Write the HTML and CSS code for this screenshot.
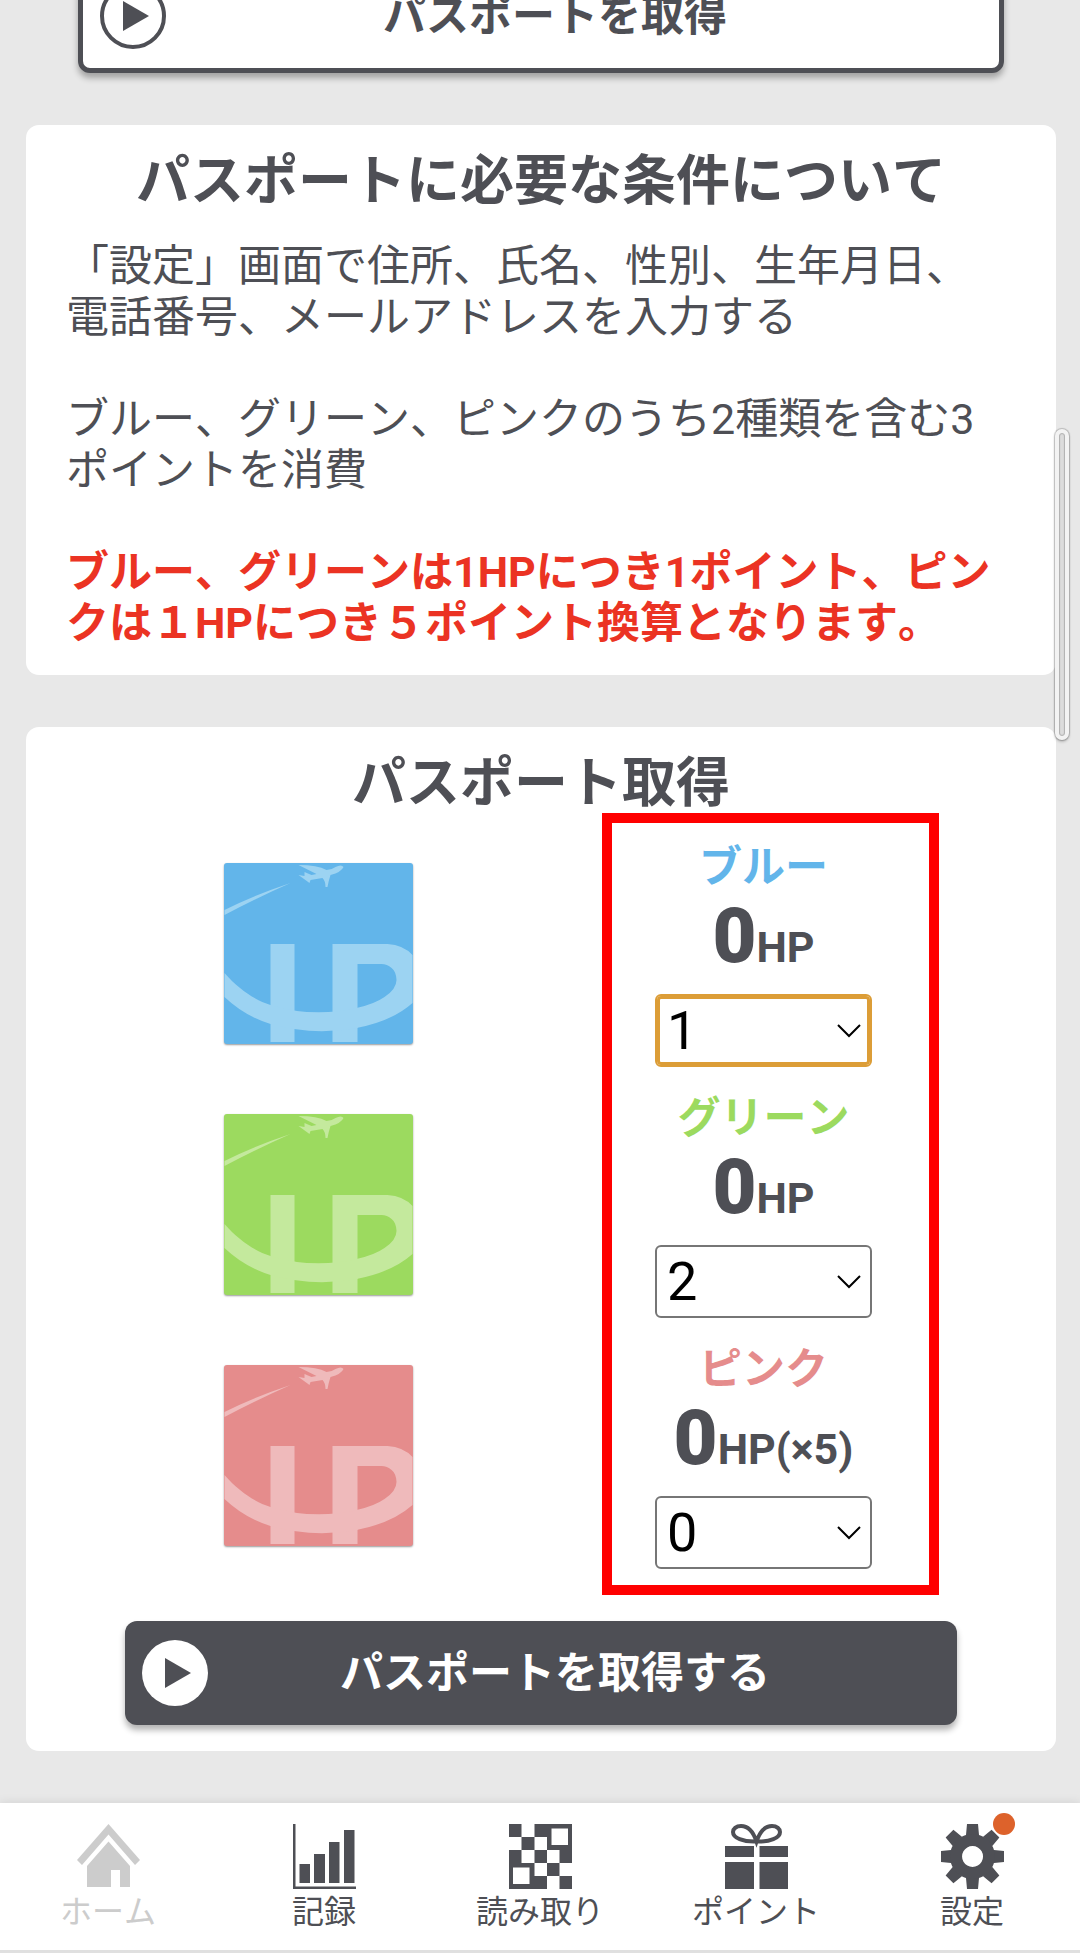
FILE: index.html
```html
<!DOCTYPE html>
<html lang="ja">
<head>
    <meta charset="UTF-8">
    <meta name="viewport" content="width=device-width, initial-scale=1.0">
    <title>パスポート取得</title>
    <link rel="stylesheet" href="styles.css">
</head>
<body>
    <!-- タイルの共通デザイン -->
    <svg class="defs" aria-hidden="true">
        <symbol id="tile" viewBox="0 0 188 181">
            <path d="M0 47 Q30 32 66 20 Q32 35 0 52Z"/>
            <path d="M74 2 Q93 2 102 7 Q107 7 111 4 Q117 1 119 4 Q117 9 106 12 Q104 18 103 24 H101 Q101 18 98 15 L86 17 L85 20 L74 12 L80 13 V9 L87 12 L92 11Z"/>
            <rect x="46" y="81" width="24" height="98"/>
            <rect x="108" y="81" width="25" height="98"/>
            <path d="M0 110 C14 126 30 137 46 142 Q88 155 133 145 V165 Q88 173 46 161 Q20 153 0 134Z"/>
            <path d="M132 81 H163 Q179 82 188 92 V140 Q168 158 132 165 V145 Q150 141 160 134 Q172 126 172 117 C172 106 164 101 157 101 H132Z"/>
        </symbol>
    </svg>

    <main>
        <button type="button" class="button button-outline">
            <svg class="play" viewBox="0 0 66 66" aria-hidden="true">
                <circle cx="33" cy="33" r="31" fill="#fff" stroke="#4e4f55" stroke-width="4"/>
                <path d="M23 18 L49 33 L23 48Z" fill="#4e4f55"/>
            </svg>
            <span>パスポートを取得</span>
        </button>

        <section class="card">
            <h2>パスポートに必要な条件について</h2>
            <div class="conditions">
                <p>「設定」画面で住所、氏名、性別、生年月日、電話番号、メールアドレスを入力する</p>
                <p>ブルー、グリーン、ピンクのうち2種類を含む3ポイントを消費</p>
                <p class="notice">ブルー、グリーンは1HPにつき1ポイント、ピンクは１HPにつき５ポイント換算となります。</p>
            </div>
        </section>

        <section class="card">
            <h2>パスポート取得</h2>
            <div class="points">
                <div class="point blue">
                    <svg class="tile" aria-hidden="true"><use href="#tile"/></svg>
                    <div class="point-info">
                        <label for="blue">ブルー</label>
                        <p class="hp"><strong>0</strong>HP</p>
                        <div class="select active">
                            <select id="blue"><option>0</option><option selected>1</option><option>2</option><option>3</option></select>
                            <svg viewBox="0 0 24 14" aria-hidden="true"><path d="M1 1 L12 12 L23 1"/></svg>
                        </div>
                    </div>
                </div>
                <div class="point green">
                    <svg class="tile" aria-hidden="true"><use href="#tile"/></svg>
                    <div class="point-info">
                        <label for="green">グリーン</label>
                        <p class="hp"><strong>0</strong>HP</p>
                        <div class="select">
                            <select id="green"><option>0</option><option>1</option><option selected>2</option><option>3</option></select>
                            <svg viewBox="0 0 24 14" aria-hidden="true"><path d="M1 1 L12 12 L23 1"/></svg>
                        </div>
                    </div>
                </div>
                <div class="point pink">
                    <svg class="tile" aria-hidden="true"><use href="#tile"/></svg>
                    <div class="point-info">
                        <label for="pink">ピンク</label>
                        <p class="hp"><strong>0</strong>HP(×5)</p>
                        <div class="select">
                            <select id="pink"><option selected>0</option><option>1</option><option>2</option><option>3</option></select>
                            <svg viewBox="0 0 24 14" aria-hidden="true"><path d="M1 1 L12 12 L23 1"/></svg>
                        </div>
                    </div>
                </div>
                <div class="highlight"></div>
            </div>
            <button type="button" class="button">
                <svg class="play" viewBox="0 0 66 66" aria-hidden="true">
                    <circle cx="33" cy="33" r="33" fill="#fff"/>
                    <path d="M23 18 L49 33 L23 48Z" fill="#4e4f55"/>
                </svg>
                <span>パスポートを取得する</span>
            </button>
        </section>
    </main>

    <nav>
        <a href="#" class="current">
            <svg viewBox="0 0 63 65" aria-hidden="true">
                <path d="M31.500 0 L63 36 L58 41 L31.500 10.500 L5 41 L0 36Z"/>
                <path d="M31.500 17.500 L53 42 V63 H43 V46 H34 V63 H10 V42Z"/>
            </svg>
            ホーム
        </a>
        <a href="#">
            <svg viewBox="0 0 63 65" aria-hidden="true">
                <path d="M0 0 H2.500 V62.500 H63 V65 H0Z"/>
                <path d="M6.500 40 H17 V59 H6.500Z M21 30 H32 V59 H21Z M36 18 H46.500 V59 H36Z M51 6 H61.500 V59 H51Z"/>
            </svg>
            記録
        </a>
        <a href="#">
            <svg viewBox="0 0 63 65" aria-hidden="true">
                <path fill-rule="evenodd" d="M25.500 0 H63 V39 H50.500 V26 H38 V13 H25.500Z M42.500 4.500 V21 H59 V4.500Z"/>
                <path fill-rule="evenodd" d="M0 26 H12.500 V39 H25.500 V52 H38 V65 H0Z M4 43.500 V60 H20.500 V43.500Z"/>
                <path d="M0 0 H12.500 V13 H0Z M12.500 13 H25.500 V26 H12.500Z M25.500 26 H38 V39 H25.500Z M38 39 H50.500 V52 H38Z M50.500 52 H63 V65 H50.500Z"/>
            </svg>
            読み取り
        </a>
        <a href="#">
            <svg viewBox="0 0 63 65" aria-hidden="true">
                <path d="M0 22 H29 V33 H0Z M34.500 22 H63 V33 H34.500Z M0 38 H29 V65 H0Z M34.500 38 H63 V65 H34.500Z"/>
                <path class="line" d="M31.500 17.500 C28 7 23 2 16 2 C11 2 8 5 8 8 C8 14 18 18 31.500 17.500 C45 18 55 14 55 8 C55 5 52 2 47 2 C40 2 35 7 31.500 17.500Z"/>
            </svg>
            ポイント
        </a>
        <a href="#">
            <span class="badge-wrap">
                <svg viewBox="0 0 63 65" aria-hidden="true">
                    <path id="tooth" d="M26 0 H37 L38 11 H25Z M25 54 H38 L37 65 H26Z"/>
                    <use href="#tooth" transform="rotate(45 31.500 32.500)"/>
                    <use href="#tooth" transform="rotate(90 31.500 32.500)"/>
                    <use href="#tooth" transform="rotate(135 31.500 32.500)"/>
                    <path fill-rule="evenodd" d="M31.500 10 A22.500 22.500 0 1 1 31.400 10Z M31.500 22 A10.500 10.500 0 1 0 31.600 22Z"/>
                </svg>
                <span class="badge"></span>
            </span>
            設定
        </a>
    </nav>
    <div class="scrollbar"></div>
</body>
</html>
```
FILE: styles.css
```css
* {
    box-sizing: border-box;
}
body {
    margin: 0;
    background-color: #e8e8e8;
    color: #4e4f55;
    font-family: Roboto, "Noto Sans CJK JP", sans-serif;
    font-size: 43px;
    font-kerning: none;
    line-height: 51px;
    overflow-x: hidden;
}
h2, p {
    margin: 0;
}
.defs {
    display: none;
}
main {
    display: flex;
    flex-direction: column;
    gap: 52px;
    margin-top: -41px;
    padding: 0 24px 52px 26px;
}
.card {
    background-color: #fff;
    border-radius: 13px;
    padding: 25px 0 26px;
}
h2 {
    font-size: 54px;
    line-height: 64px;
    text-align: center;
    margin-bottom: 27px;
}
.conditions {
    display: flex;
    flex-direction: column;
    gap: 51px;
    padding: 0 48px 0 40px;
}
.notice {
    color: #eb3323;
    font-weight: bold;
}

/* ボタン */
.button {
    display: flex;
    align-items: center;
    width: auto;
    min-width: calc(100% - 198px);
    height: 104px;
    margin: 52px 99px 0;
    padding: 0 17px;
    border: none;
    border-radius: 12px;
    background-color: #4e4f55;
    color: #fff;
    font-family: inherit;
    font-size: 43px;
    font-weight: bold;
    line-height: 51px;
    box-shadow: 0 5px 6px rgba(0,0,0,0.3);
    cursor: pointer;
}
.button span {
    flex: 1;
    padding-right: 38px;
    text-align: center;
}
.button-outline {
    height: 114px;
    margin: 0 52px;
    border: 5px solid #4e4f55;
    background-color: #fff;
    color: #4e4f55;
}
.play {
    width: 66px;
    height: 66px;
}

/* ポイント選択 */
.points {
    position: relative;
    display: flex;
    flex-direction: column;
    gap: 27px;
    padding: 0 70px;
}
.point {
    display: grid;
    grid-template-columns: 1fr 1fr;
    justify-items: center;
}
.tile {
    width: 189px;
    height: 181px;
    margin-top: 20px;
    border-radius: 3px;
    box-shadow: 0 1px 2px rgba(0,0,0,0.4);
}
.blue label { color: #62b5ea; }
.blue .tile { background-color: #62b5ea; fill: #9cd3f2; }
.green label { color: #9cda5f; }
.green .tile { background-color: #9cda5f; fill: #c4e99d; }
.pink label { color: #e58c8c; }
.pink .tile { background-color: #e58c8c; fill: #efbabb; }
.point-info {
    display: flex;
    flex-direction: column;
    align-items: center;
}
label {
    font-weight: bold;
    line-height: 48px;
}
.hp {
    font-weight: bold;
    margin-bottom: 13px;
}
.hp strong {
    font-size: 76px;
    line-height: 90px;
}
.select {
    position: relative;
    width: 217px;
}
.select select {
    display: block;
    width: 100%;
    height: 73px;
    padding: 0 10px;
    border: 2px solid #767676;
    border-radius: 6px;
    background-color: #fff;
    color: #000;
    font-family: inherit;
    font-size: 54px;
    appearance: none;
}
.select.active select {
    border-color: #dc9d37;
    box-shadow: inset 0 0 0 3px #dc9d37;
}
.select svg {
    position: absolute;
    top: 30px;
    right: 11px;
    width: 24px;
    height: 14px;
    fill: none;
    stroke: #000;
    stroke-width: 2;
    pointer-events: none;
}
.highlight {
    position: absolute;
    top: -30px;
    bottom: -26px;
    right: 117px;
    width: 337px;
    border: 10px solid #f00;
    pointer-events: none;
}

/* 下部メニュー */
nav {
    display: grid;
    grid-template-columns: repeat(5, 1fr);
    padding: 21px 0 15px;
    border-bottom: 3px solid #e0e0e0;
    background-color: #fff;
    box-shadow: 0 0 10px rgba(0,0,0,0.1);
}
nav a {
    display: flex;
    flex-direction: column;
    align-items: center;
    color: #4e4f55;
    font-size: 32px;
    line-height: 46px;
    text-decoration: none;
}
nav a.current {
    color: #ccc;
}
nav svg {
    display: block;
    width: 63px;
    height: 65px;
    fill: currentColor;
}
nav .line {
    fill: none;
    stroke: currentColor;
    stroke-width: 4;
}
.badge-wrap {
    position: relative;
}
.badge {
    position: absolute;
    top: -11px;
    right: -11px;
    width: 22px;
    height: 22px;
    border-radius: 50%;
    background-color: #dd622b;
}
.scrollbar {
    position: absolute;
    top: 429px;
    right: 11px;
    width: 14px;
    height: 311px;
    border: 4px solid #f3f3f3;
    border-radius: 7px;
    background-color: #dcdcdc;
    box-shadow: 0 0 1px 1px rgba(0,0,0,0.2), 0 2px 3px rgba(0,0,0,0.2), inset 0 0 1px 1px rgba(0,0,0,0.2);
}
```
